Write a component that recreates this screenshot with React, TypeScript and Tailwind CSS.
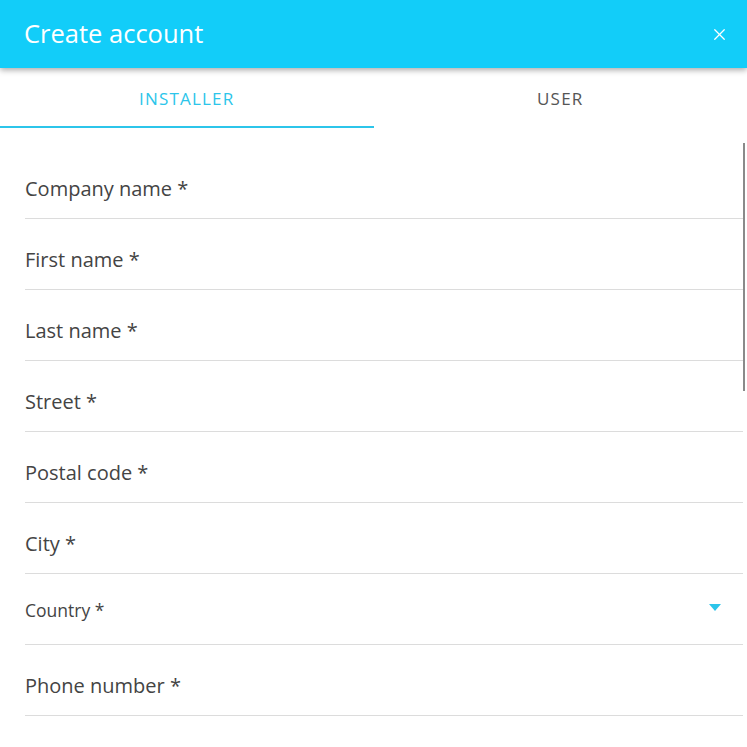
import { X } from 'lucide-react';

const fields = ['Company name *', 'First name *', 'Last name *', 'Street *', 'Postal code *', 'City *'];

function Field({ label }: { label: string }) {
  return (
    <div className="h-[71px] border-b border-[#dcdcdc] flex items-end pb-[15px]">
      <span className="text-[20px] leading-[28px] text-[#444]">{label}</span>
    </div>
  );
}

export default function App() {
  return (
    <div
      className="relative h-[747px] w-[747px] overflow-hidden bg-white"
      style={{ fontFamily: '"Open Sans", "Noto Sans", sans-serif' }}
    >
      {/* Header */}
      <header className="relative z-10 h-[68px] bg-[#12cdf9] flex items-center justify-between pl-[24px] pr-[18px] shadow-[0_2px_6px_rgba(0,0,0,0.35)]">
        <h1 className="text-[25.5px] text-white leading-none">Create account</h1>
        <X className="h-[19px] w-[19px] text-white" strokeWidth={1.6} />
      </header>

      {/* Tabs */}
      <div className="flex h-[60px]">
        <div className="relative flex-1 flex items-center justify-center pt-[2px]">
          <span className="text-[17px] tracking-[0.07em] text-[#2cc5ea]">INSTALLER</span>
          <div className="absolute left-0 right-0 bottom-[0px] h-[2px] bg-[#2cc5ea]" />
        </div>
        <div className="flex-1 flex items-center justify-center pt-[2px]">
          <span className="text-[17px] tracking-[0.07em] text-[#555]">USER</span>
        </div>
      </div>

      {/* Form */}
      <div className="pl-[25px] pr-[4px] pt-[20px]">
        {fields.map((f) => (
          <Field key={f} label={f} />
        ))}
        <div className="h-[71px] border-b border-[#dcdcdc] flex items-center justify-between pr-[22px] pt-[3px]">
          <span className="text-[17.5px] text-[#444]">Country *</span>
          <svg width="12" height="8" viewBox="0 0 12 8" className="mt-[-6px]">
            <path d="M0 0 L12 0 L6 7 Z" fill="#2cc5ea" />
          </svg>
        </div>
        <Field label="Phone number *" />
      </div>

      {/* Scrollbar thumb */}
      <div className="absolute right-[2px] top-[143px] h-[248px] w-[2px] bg-[#8a8a8a]" />
    </div>
  );
}
